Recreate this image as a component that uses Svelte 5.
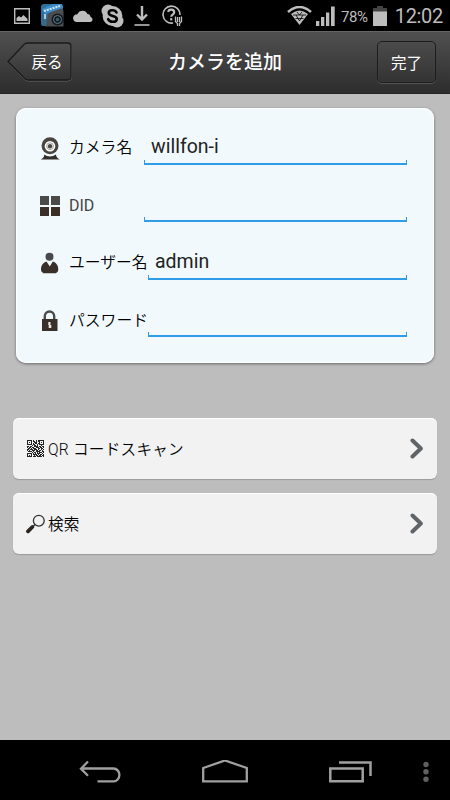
<script>
	const fields = [
		{ icon: 'camera', label: 'カメラ名', value: 'willfon-i' },
		{ icon: 'grid', label: 'DID', value: '' },
		{ icon: 'user', label: 'ユーザー名', value: 'admin', wide: true },
		{ icon: 'lock', label: 'パスワード', value: '', wide: true }
	];

	const actions = [
		{ icon: 'qr', label: 'QR コードスキャン' },
		{ icon: 'search', label: '検索' }
	];

	const qr = [
		'11111010010111111',
		'10001011010110001',
		'10101001110010101',
		'10001010110110001',
		'11111011001011111',
		'00000101101000100',
		'11011001111011011',
		'10110110011101101',
		'01101011100110110',
		'11011101110100101',
		'10100111011011010',
		'01111010011110011',
		'00000101101011101',
		'11111010101110010',
		'10001011110101101',
		'10101001011011011',
		'11111011101111101'
	];
	let qrPath = qr
		.map((row, y) => [...row].map((c, x) => (c === '1' ? `M${x} ${y}h1v1h-1z` : '')).join(''))
		.join('');
</script>

<div class="screen">
	<div class="status">
		<div class="notes">
			<svg width="16" height="16" viewBox="0 0 16 16">
				<path d="M.7.7h14.6v14.6H.7z" fill="none" stroke="#bdbdbd" stroke-width="1.4" />
				<path d="M2.5 13V10l2.5-2 2 1.5L9.5 7 13.5 11v2z" fill="#bdbdbd" />
			</svg>
			<svg width="23" height="23" viewBox="0 0 23 23">
				<rect width="22" height="22" rx="3" fill="#2f6f9c" />
				<path d="M7 10 13 5l8-1 1.500 3v15.500H4z" fill="#4b4d50" />
				<path d="M1 5 12 0l9 0 1 4-18 6z" fill="#3c8dc9" />
				<path d="M3 7 19 2" stroke="#d3e7f2" stroke-width="2" stroke-dasharray="2 1" />
				<path d="M0 12l7-1-2 11H3q-3 0-3-3z" fill="#346a8b" />
				<circle cx="16.500" cy="15.500" r="6" fill="#171b20" />
				<circle cx="16.500" cy="15.500" r="4" fill="none" stroke="#5b7f8e" />
				<circle cx="16.500" cy="15.500" r="1.700" fill="#315f73" />
				<path d="M4 10v5" stroke="#d8e8ee" stroke-width="1.500" />
			</svg>
			<svg width="21" height="12" viewBox="0 0 21 12">
				<path d="M4 12a4 4 0 0 1-.6-7.500Q5 4.500 5.500 4A5.400 5.400 0 0 1 15.500 4Q18 4 18.600 7C21.500 8 21 12 18 12z" fill="#bdbdbd" />
			</svg>
			<svg width="23" height="24" viewBox="0 0 23 24">
				<circle cx="7" cy="7" r="6.500" fill="#bdbdbd" />
				<circle cx="16" cy="17" r="6.500" fill="#bdbdbd" />
				<circle cx="11.500" cy="12" r="9.900" fill="#bdbdbd" />
				<path d="M15.500 8.500C14 5.400 7.800 5.600 7.800 8.900c0 4 8 2 8 6 0 3.800-7.100 3.800-8.600.3" fill="none" stroke="#000" stroke-width="2.600" stroke-linecap="round" />
			</svg>
			<svg width="16" height="20" viewBox="0 0 16 20">
				<path d="M8 0v13M3 8.500l5 5 5-5" fill="none" stroke="#bdbdbd" stroke-width="2.400" />
				<path d="M.5 19h15" stroke="#bdbdbd" stroke-width="1.600" />
			</svg>
			<svg width="21" height="21" viewBox="0 0 21 21">
				<path d="M11 18A8.500 8.500 0 1 1 18 10" fill="none" stroke="#bdbdbd" stroke-width="1.600" />
				<path d="M6.300 7C6.500 3.700 12.200 3.900 12.200 7.200c0 2.400-3 2.400-3 4.600" fill="none" stroke="#bdbdbd" stroke-width="2.200" />
				<path d="M8.100 13.200h2.200v2.200H8.100z" fill="#bdbdbd" />
				<path d="M13.500 11.500v5l2 2V21M15.500 12v5M19.500 11.500v5l-2 2V21M17.500 12v5" fill="none" stroke="#bdbdbd" stroke-width="1.300" />
			</svg>
		</div>
		<div class="system">
			<svg width="25" height="20" viewBox="0 0 25 20">
				<path d="M1 6Q12.500-4 24 6" fill="none" stroke="#bdbdbd" stroke-width="2.600" />
				<path d="M4 8Q12.500 1 21 8L12.500 19z" fill="#bdbdbd" />
				<path d="M6 9h13M8.500 12.500h8M10 6l2.500 3L15 6M9 9l3.500 6L16 9" fill="none" stroke="#000" stroke-width=".8" />
			</svg>
			<svg width="19" height="20" viewBox="0 0 19 20">
				<path d="M0 15h3.300v5H0zM5 11h3.300v9H5zM10 6.500h3.300V20H10zM15 .5h3.700V20H15z" fill="#bdbdbd" />
			</svg>
			<span class="percent">78%</span>
			<svg width="14" height="20" viewBox="0 0 14 20">
				<path d="M4 0h6v2h4v4H0V2h4z" fill="#444" />
				<path d="M0 5.500h14V20H0z" fill="#bdbdbd" />
			</svg>
			<span class="clock">12:02</span>
		</div>
	</div>

	<header>
		<button class="back">
			<svg width="66" height="41" viewBox="0 0 66 41">
				<path d="M1 20 17.500 3Q19 1.800 21 1.800H60.500Q64.500 1.800 64.500 5.500V35Q64.500 39 60.500 39H21Q19 39 17.500 37.500Z" fill="none" stroke="#646464" />
				<path d="M1 19.500 17.500 2Q19 1 21 1H60.500Q64 1 64 4.500V34Q64 38 60.500 38H21Q19 38 17.500 36.500Z" fill="url(#btn)" stroke="#1b1b1b" stroke-width="1.300" />
				<defs>
					<linearGradient id="btn" x2="0" y2="1">
						<stop stop-color="#505050" />
						<stop offset="1" stop-color="#333" />
					</linearGradient>
				</defs>
			</svg>
			<span>戻る</span>
		</button>
		<h1>カメラを追加</h1>
		<button class="done">完了</button>
	</header>

	<main>
		<div class="card">
			{#each fields as f}
				<div class="row">
					<svg class="icon" width="22" height="24" viewBox="0 0 22 24">
						{#if f.icon === 'camera'}
							<path d="M1.800 23.500Q6 21 5 18.500q6 4 12 0 0 3 3.800 5z" fill="#342e2b" />
							<circle cx="11" cy="9.700" r="8.500" fill="#48443f" />
							<circle cx="11" cy="10.200" r="5.300" fill="#fff" />
							<circle cx="11" cy="10.200" r="3.400" fill="none" stroke="#8b8885" stroke-width=".8" />
							<circle cx="11" cy="10.200" r="2.200" fill="#4b4640" />
						{:else if f.icon === 'grid'}
							<path d="M1 3h9v9H1zM12 3h9v9h-9z" fill="#4a4a48" />
							<path d="M1 14h9v9H1zM12 14h9v9h-9z" fill="#3a3028" />
						{:else if f.icon === 'user'}
							<circle cx="10.500" cy="5.700" r="4" fill="#484a4d" />
							<path d="M2 19c0-5 2-7 5.500-8.500l3.300 5 3-5c4 1.500 5.500 4 5.500 8.500q0 2-2.500 3.200H4.500Q2 21 2 19z" fill="#3a302a" />
						{:else}
							<path d="M5.800 12V8.200a4.700 4.700 0 0 1 9.400 0V12" fill="none" stroke="#4b4b49" stroke-width="2.400" />
							<path d="M3 11h15.500v12H3z" fill="#3a302a" />
							<path d="M9.300 14h2.200v3h.8v3h-2.600v-3h-.4z" fill="#e8e4df" />
						{/if}
					</svg>
					<span class="label" class:latin={f.icon === 'grid'}>{f.label}</span>
					<div class="field" class:wide={f.wide}>{f.value}</div>
				</div>
			{/each}
		</div>

		<div class="actions">
			{#each actions as a}
				<div class="action">
					{#if a.icon === 'qr'}
						<svg width="20" height="17" viewBox="-1 0 20 17" shape-rendering="crispEdges">
							<path d={qrPath} fill="#222" />
						</svg>
					{:else}
						<svg width="20" height="20" viewBox="0 0 20 20">
							<circle cx="12.800" cy="6.700" r="5.400" fill="none" stroke="#333" stroke-width="1.300" />
							<path d="M9 10.500 7 12.500" stroke="#333" stroke-width="1.200" />
							<path d="M6.300 13 2 17.300" stroke="#2b241f" stroke-width="3.800" stroke-linecap="round" />
						</svg>
					{/if}
					<span>{a.label}</span>
					<svg class="chevron" width="14" height="22" viewBox="0 0 14 22">
						<path d="M2.500 2.500 10.800 10.500 2.500 18.500" fill="none" stroke="#606467" stroke-width="4" stroke-linecap="round" stroke-linejoin="round" />
					</svg>
				</div>
			{/each}
		</div>
	</main>

	<nav>
		<svg width="42" height="24" viewBox="0 0 42 24">
			<path d="M2 8.500H34.500a5.800 6.300 0 0 1 0 12.800H18.500M9 1.500 2 8.700l7 7" fill="none" stroke="#a0a0a0" stroke-width="2.300" />
		</svg>
		<svg width="46" height="24" viewBox="0 0 46 24">
			<path d="M1.200 8 23 .5l21.800 7.500v13.300H1.200z" fill="none" stroke="#a0a0a0" stroke-width="2.300" />
		</svg>
		<svg width="44" height="24" viewBox="0 0 44 24">
			<path d="M1.300 8.500h32.400v12.800H1.300z" fill="none" stroke="#a0a0a0" stroke-width="2.500" />
			<path d="M10 2.500h31.500V16" fill="none" stroke="#a0a0a0" stroke-width="2.500" />
		</svg>
		<svg class="more" width="6" height="22" viewBox="0 0 6 22">
			<circle cx="3" cy="3.500" r="2.700" />
			<circle cx="3" cy="10.800" r="2.700" />
			<circle cx="3" cy="18.200" r="2.700" />
		</svg>
	</nav>
</div>

<style>
	:global(body) {
		margin: 0;
		background: #bdbdbd;
	}
	svg {
		display: block;
		flex: none;
	}
	.screen {
		display: flex;
		flex-direction: column;
		width: 450px;
		height: 800px;
		overflow: hidden;
		background: #bdbdbd;
		font-family: Roboto, "Noto Sans CJK JP", sans-serif;
		color: #1c1c1c;
	}
	.status {
		display: flex;
		justify-content: space-between;
		box-sizing: border-box;
		height: 31px;
		padding: 0 7px 0 14px;
		background: #000;
		color: #bdbdbd;
	}
	.notes,
	.system {
		display: flex;
		align-items: center;
	}
	.notes {
		gap: 8px;
	}
	.notes svg:nth-child(2) {
		margin-left: 3px;
	}
	.notes svg:nth-child(5) {
		margin-left: 2px;
	}
	.notes svg:nth-child(6) {
		margin-left: 4px;
	}
	.system svg:nth-child(2) {
		margin-left: 4px;
	}
	.percent {
		margin: 2px 5px 0 6px;
		font-size: 15px;
		letter-spacing: -0.4px;
	}
	.clock {
		margin: 1px 0 0 8px;
		font-size: 20px;
		letter-spacing: -0.3px;
	}
	header {
		display: flex;
		align-items: center;
		justify-content: space-between;
		box-sizing: border-box;
		height: 63px;
		padding: 0 14px 0 7px;
		border-top: 1px solid #656565;
		border-bottom: 1px solid #242424;
		background: linear-gradient(#505050, #2d2d2d);
		color: #fff;
	}
	h1 {
		margin: 0 0 3px;
		font-size: 19px;
		font-weight: 500;
		font-family: "Noto Sans CJK JP", sans-serif;
		line-height: 28px;
	}
	button {
		padding: 0;
		border: 0;
		background: none;
		color: #fff;
		font-family: "Noto Sans CJK JP", sans-serif;
		font-size: 15.5px;
		line-height: 20px;
	}
	.back {
		display: grid;
		align-items: center;
	}
	.back > * {
		grid-area: 1 / 1;
	}
	.back span {
		z-index: 1;
		padding: 0 0 3px 14px;
	}
	.done {
		box-sizing: border-box;
		width: 59px;
		height: 42px;
		margin-bottom: 1px;
		padding-bottom: 1px;
		border: 1.5px solid #1b1b1b;
		border-radius: 5px;
		background: linear-gradient(#4b4b4b, #333);
		box-shadow: 0 1px 0 #555, inset 0 0 1px #666;
	}
	main {
		flex: 1;
		padding: 14px 13px 0;
	}
	.card {
		box-sizing: border-box;
		width: 418px;
		height: 255px;
		margin-left: 3px;
		padding: 11px 27px 0 23px;
		border-radius: 10px;
		background: #f1f9fd;
		box-shadow: 0 1px 3px #666, inset 0 0 1px 1px #fff;
	}
	.row {
		display: flex;
		align-items: center;
		height: 57.5px;
	}
	.label {
		width: 75px;
		margin: 0 0 1px 8px;
		font-size: 15.8px;
		line-height: 24px;
		white-space: nowrap;
		font-family: "Noto Sans CJK JP", sans-serif;
		font-weight: 350;
		color: #000;
	}
	.label.latin {
		margin-bottom: -1px;
		font-family: Roboto, sans-serif;
		font-size: 16px;
		font-weight: 400;
		color: #444;
	}
	.field {
		position: relative;
		flex: 1;
		box-sizing: border-box;
		height: 34px;
		padding: 0 7px;
		font-size: 19.5px;
		line-height: 32px;
		color: #222;
	}
	.field::after {
		content: "";
		position: absolute;
		inset: auto 0 0;
		height: 3px;
		border: solid #2f9ce8;
		border-width: 0 1px 2px;
	}
	.wide {
		margin-left: 4px;
	}
	.actions {
		display: grid;
		gap: 14px;
		margin-top: 55px;
	}
	.action {
		display: flex;
		align-items: center;
		box-sizing: border-box;
		height: 61px;
		padding: 0 13px;
		border-radius: 6px;
		background: #f2f2f2;
		box-shadow: 0 1px 1px #999, inset 0 1px 0 #fff;
		font-size: 15.6px;
		font-weight: 350;
		letter-spacing: 0.25px;
		color: #000;
	}
	.action span {
		margin: 0 0 2px 2px;
	}
	.chevron {
		margin-left: auto;
	}
	nav {
		display: flex;
		align-items: center;
		gap: 81px;
		box-sizing: border-box;
		height: 60px;
		padding: 3px 0 0 79px;
		background: #000;
	}
	.more {
		margin-left: -31px;
		fill: #606060;
	}
</style>
